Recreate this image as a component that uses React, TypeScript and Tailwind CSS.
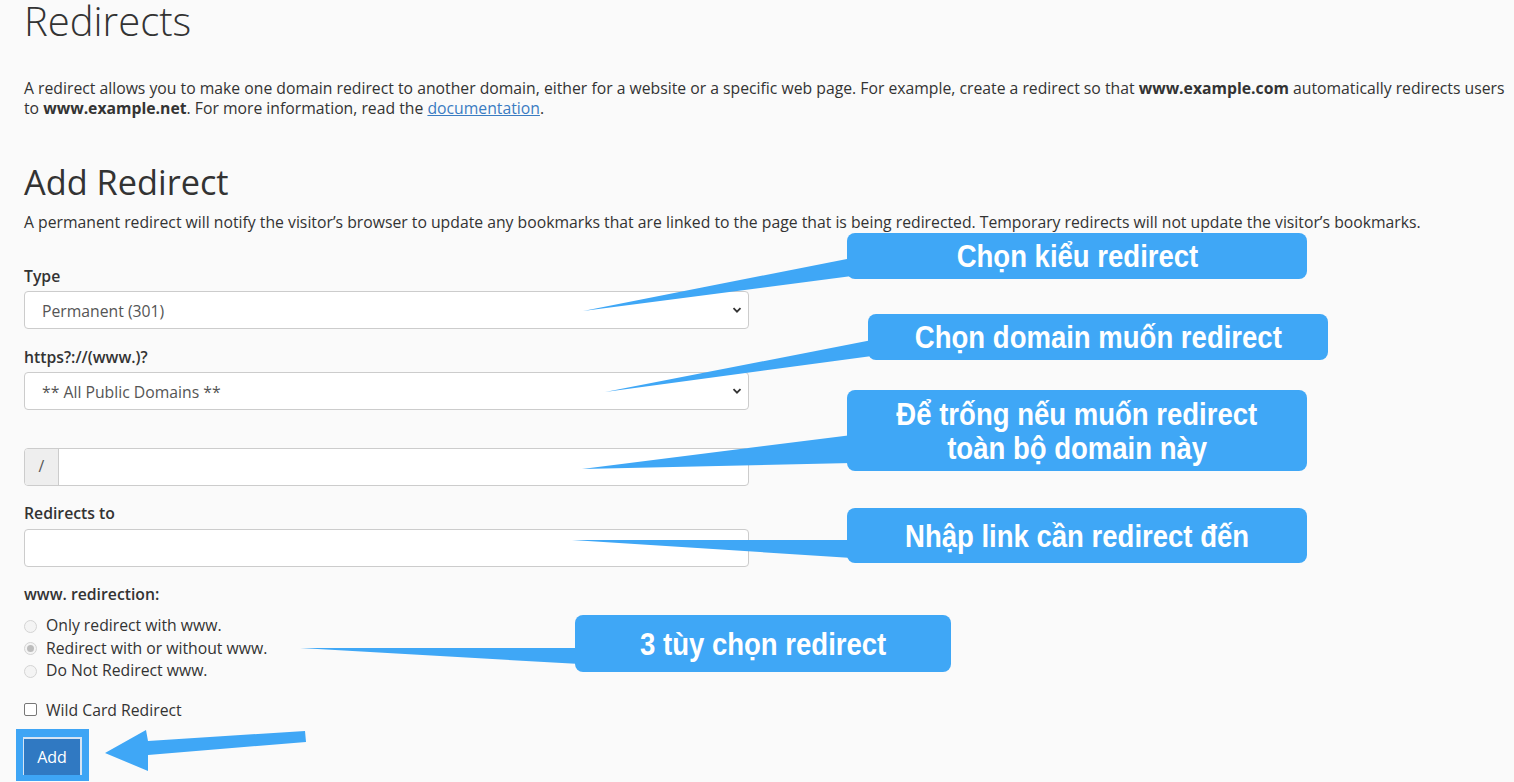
import React from "react";

const callouts = [
  { text: ["Chọn kiểu redirect"], box: "left-[847px] top-[233px] w-[460px] h-[46px]" },
  { text: ["Chọn domain muốn redirect"], box: "left-[868px] top-[314px] w-[460px] h-[46px]" },
  { text: ["Để trống nếu muốn redirect", "toàn bộ domain này"], box: "left-[847px] top-[390px] w-[460px] h-[81px]" },
  { text: ["Nhập link cần redirect đến"], box: "left-[847px] top-[508px] w-[460px] h-[55px]" },
  { text: ["3 tùy chọn redirect"], box: "left-[575px] top-[615px] w-[376px] h-[57px]" },
];

function Chevron() {
  return (
    <svg width="10" height="10" viewBox="0 0 10 10" className="text-[#333]">
      <path d="M1.5 3.2 L5 6.7 L8.5 3.2" fill="none" stroke="currentColor" strokeWidth="1.8" />
    </svg>
  );
}

function Select({ value }: { value: string }) {
  return (
    <div className="flex h-[38px] w-[725px] items-center justify-between rounded-[4px] border border-[#cccccc] bg-white pr-[6px] pl-[17px] text-[#555]">
      <span className="pt-[3px]">{value}</span>
      <Chevron />
    </div>
  );
}

function Radio({ label, checked }: { label: string; checked?: boolean }) {
  return (
    <div className="flex h-[22.5px] items-center gap-[9px]">
      <span className="flex h-[13px] w-[13px] items-center justify-center rounded-full border border-[#d4d4d4] bg-[#f4f4f4]">
        {checked && <span className="h-[7px] w-[7px] rounded-full bg-[#bdbdbd]" />}
      </span>
      <span>{label}</span>
    </div>
  );
}

export default function App() {
  return (
    <div className="relative h-[782px] w-full overflow-hidden bg-[#fafafa] font-['Open_Sans',sans-serif] text-[15.75px] text-[#333]">
      <div className="pr-[8px] pl-6">
        <h1 className="text-[40px] leading-[42px] font-light">Redirects</h1>
        <p className="mt-[36px] leading-[20px]">
          A redirect allows you to make one domain redirect to another domain, either for a website or a specific web page. For example, create a redirect so that{" "}
          <b>www.example.com</b> automatically redirects users to <b>www.example.net</b>. For more information, read the{" "}
          <a href="#" className="text-[#3a7cc2] underline">documentation</a>.
        </p>

        <h2 className="mt-[46px] text-[34.3px] leading-[36px]">Add Redirect</h2>
        <p className="mt-[12px] leading-[20px]">
          A permanent redirect will notify the visitor’s browser to update any bookmarks that are linked to the page that is being redirected. Temporary redirects will not update the visitor’s bookmarks.
        </p>

        <label className="mt-[34px] block leading-[20px] font-semibold">Type</label>
        <div className="mt-[5px]">
          <Select value="Permanent (301)" />
        </div>

        <label className="mt-[18px] block leading-[20px] font-semibold">https?://(www.)?</label>
        <div className="mt-[5px]">
          <Select value="** All Public Domains **" />
        </div>

        <div className="mt-[38px] flex h-[38px] w-[725px] overflow-hidden rounded-[4px] border border-[#cccccc] bg-white">
          <span className="flex w-[34px] items-center justify-center border-r border-[#cccccc] bg-[#eeeeee] text-[#555]">/</span>
          <span className="flex-1" />
        </div>

        <label className="mt-[17px] block leading-[20px] font-semibold">Redirects to</label>
        <div className="mt-[6px] h-[38px] w-[725px] rounded-[4px] border border-[#cccccc] bg-white" />

        <label className="mt-[17px] block leading-[20px] font-semibold">www. redirection:</label>
        <div className="mt-[11px] flex flex-col">
          <Radio label="Only redirect with www." />
          <Radio label="Redirect with or without www." checked />
          <Radio label="Do Not Redirect www." />
        </div>

        <div className="mt-[17px] flex items-center gap-[9px] leading-[20px]">
          <span className="h-[13px] w-[13px] rounded-[2px] border border-[#777] bg-white" />
          <span>Wild Card Redirect</span>
        </div>

        <div className="mt-[9px] -ml-[8px] flex w-fit bg-[#3ea5f5] px-[7px] pt-[8px] pb-[6px]">
          <button className="h-[38px] w-[59px] border-t-2 border-r-2 border-l border-white/80 bg-[#3079c2] text-[16px] text-white">
            Add
          </button>
        </div>
      </div>

      <svg className="pointer-events-none absolute inset-0" width="1514" height="782" viewBox="0 0 1514 782">
        <g fill="#3fa7f6">
          <polygon points="852,258 852,276 583,311" />
          <polygon points="872,340 872,356 605,392" />
          <polygon points="852,435 852,463 582,469" />
          <polygon points="852,540 852,558 572,540" />
          <polygon points="580,648 580,664 300,648" />
          <polygon points="305,731 148,741 146,730 105,753 148,771 148,755 306,742" />
        </g>
      </svg>

      {callouts.map((c) => (
        <div
          key={c.text[0]}
          className={`absolute flex flex-col items-center justify-center rounded-[8px] bg-[#3fa7f6] font-['Liberation_Sans',sans-serif] text-[32px] leading-[34px] font-bold text-white ${c.box}`}
        >
          {c.text.map((t) => (
            <span key={t} className="block scale-x-[0.86] whitespace-nowrap">
              {t}
            </span>
          ))}
        </div>
      ))}
    </div>
  );
}
